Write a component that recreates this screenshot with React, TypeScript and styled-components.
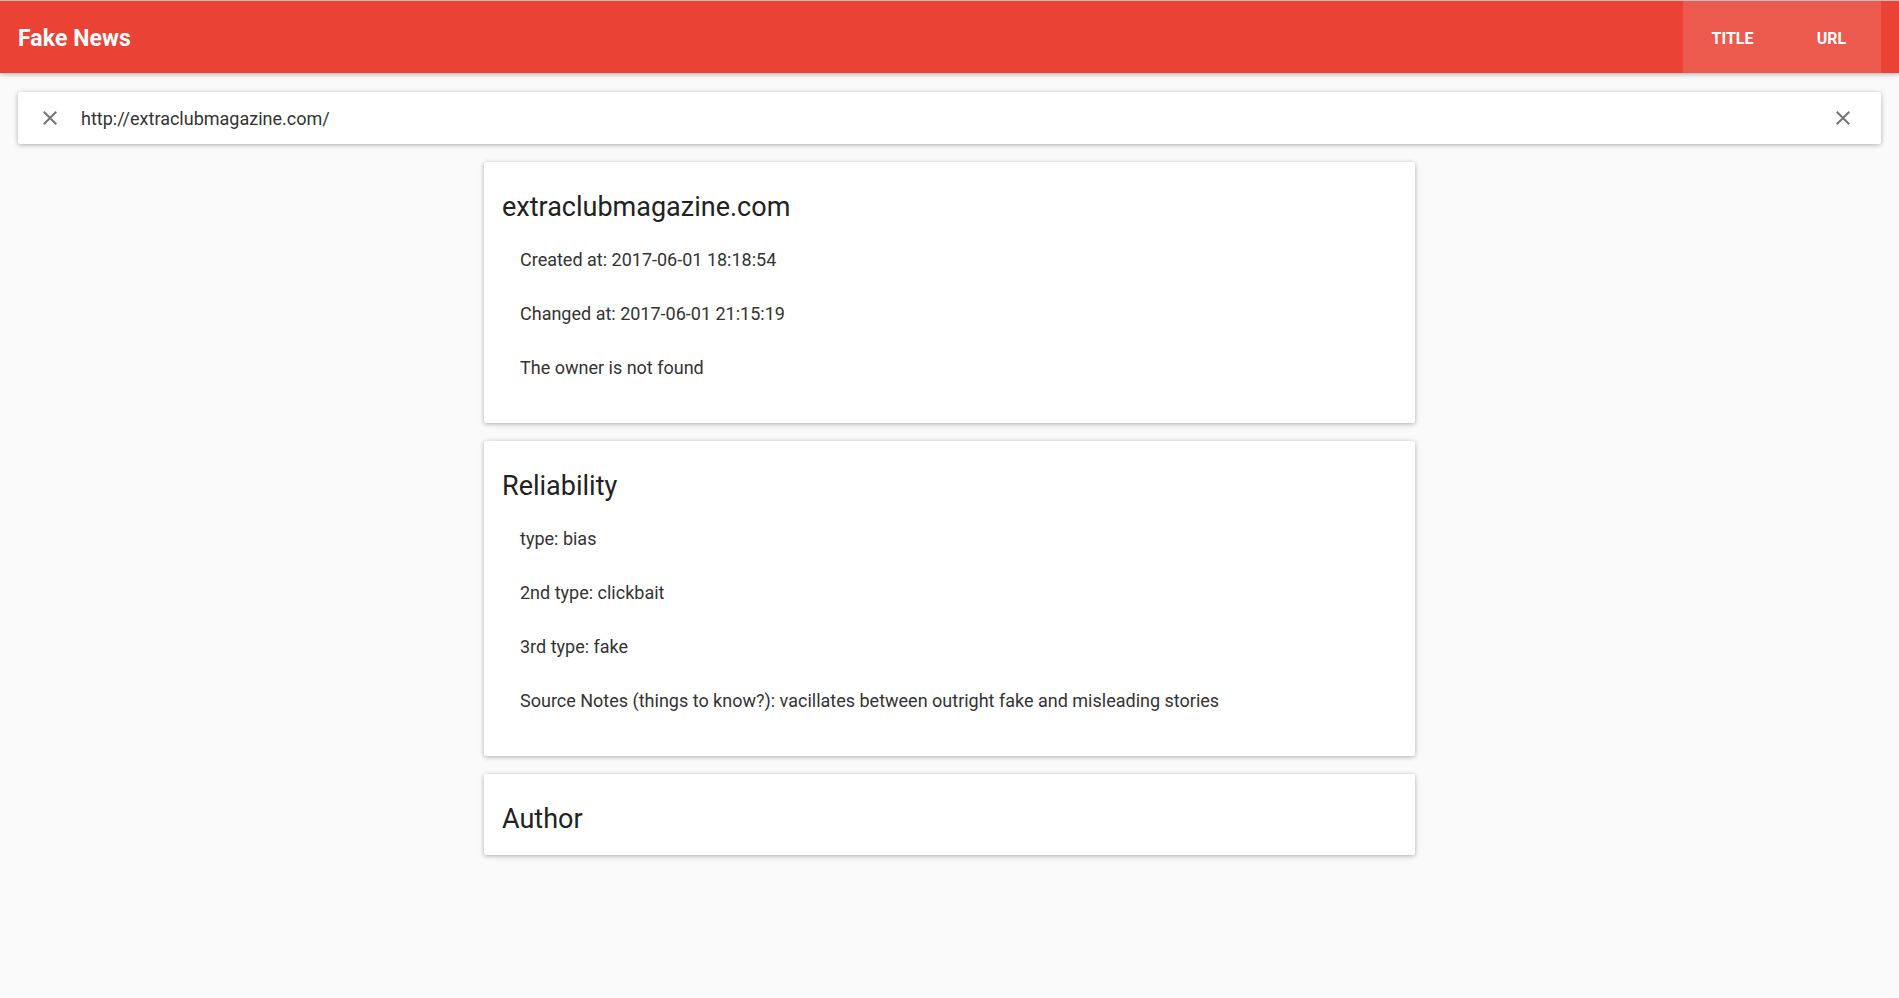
import React from "react";
import styled, { createGlobalStyle } from "styled-components";

const Global = createGlobalStyle`
  html, body { margin: 0; padding: 0; background: #fafafa; }
  body { font-family: Roboto, "Liberation Sans", sans-serif; -webkit-font-smoothing: antialiased; }
  * { box-sizing: border-box; }
`;

const Page = styled.div`
  min-height: 998px;
  background: #fafafa;
  padding-bottom: 40px;
`;

const AppBar = styled.header`
  height: 73px;
  border-top: 1px solid #bdbdbd;
  background: #ea4335;
  display: flex;
  align-items: stretch;
  box-shadow: 0 1px 6px rgba(0, 0, 0, 0.16), 0 1px 4px rgba(0, 0, 0, 0.18);
  position: relative;
  z-index: 2;
`;

const Brand = styled.h1`
  flex: 1;
  margin: 0;
  padding: 2px 0 0 18px;
  display: flex;
  align-items: center;
  color: #fff;
  font-size: 23px;
  font-weight: 700;
  letter-spacing: 0.1px;
`;

const Tabs = styled.nav`
  display: flex;
  margin-right: 18px;
  background: rgba(255, 255, 255, 0.12);
`;

const Tab = styled.button`
  width: 99px;
  border: none;
  background: transparent;
  color: #fff;
  font-family: Roboto, "Liberation Sans", sans-serif;
  font-size: 16px;
  font-weight: 700;
  text-transform: uppercase;
  cursor: pointer;
  padding: 2px 0 0;
`;

const SearchBar = styled.div`
  margin: 19px 18px 0;
  height: 52px;
  background: #fff;
  border-radius: 2px;
  display: flex;
  align-items: center;
  padding: 0 26px 0 20px;
  box-shadow: 0 1px 6px rgba(0, 0, 0, 0.12), 0 1px 4px rgba(0, 0, 0, 0.2);
`;

const IconButton = styled.span`
  width: 24px;
  height: 24px;
  display: inline-flex;
  color: #757575;
  flex: none;
`;

const SearchText = styled.div`
  flex: 1;
  margin-left: 19px;
  font-size: 18px;
  color: #333;
`;

const Cards = styled.main`
  width: 931px;
  margin: 18px auto 0;
  display: flex;
  flex-direction: column;
  gap: 18px;
`;

const Card = styled.section`
  background: #fff;
  border-radius: 2px;
  padding: 29px 16px 20px 18px;
  box-shadow: 0 1px 6px rgba(0, 0, 0, 0.12), 0 1px 4px rgba(0, 0, 0, 0.2);
`;

const CardTitle = styled.h2`
  margin: 0;
  font-size: 27px;
  line-height: 32px;
  font-weight: 400;
  color: #222;
`;

const List = styled.ul`
  list-style: none;
  margin: 0;
  padding: 10px 0 8px 18px;
`;

const Item = styled.li`
  height: 54px;
  line-height: 54px;
  font-size: 18px;
  color: #333;
`;

const CloseIcon = () => (
  <IconButton>
    <svg viewBox="0 0 24 24" width="24" height="24" fill="currentColor">
      <path d="M19 6.41L17.59 5 12 10.59 6.41 5 5 6.41 10.59 12 5 17.59 6.41 19 12 13.41 17.59 19 19 17.59 13.41 12z" />
    </svg>
  </IconButton>
);

const sections: { title: string; items: string[] }[] = [
  {
    title: "extraclubmagazine.com",
    items: [
      "Created at: 2017-06-01 18:18:54",
      "Changed at: 2017-06-01 21:15:19",
      "The owner is not found",
    ],
  },
  {
    title: "Reliability",
    items: [
      "type: bias",
      "2nd type: clickbait",
      "3rd type: fake",
      "Source Notes (things to know?): vacillates between outright fake and misleading stories",
    ],
  },
  { title: "Author", items: [] },
];

export default function App() {
  return (
    <Page>
      <Global />
      <AppBar>
        <Brand>Fake News</Brand>
        <Tabs>
          <Tab>Title</Tab>
          <Tab>URL</Tab>
        </Tabs>
      </AppBar>
      <SearchBar>
        <CloseIcon />
        <SearchText>http://extraclubmagazine.com/</SearchText>
        <CloseIcon />
      </SearchBar>
      <Cards>
        {sections.map((s) => (
          <Card key={s.title}>
            <CardTitle>{s.title}</CardTitle>
            {s.items.length > 0 && (
              <List>
                {s.items.map((it) => (
                  <Item key={it}>{it}</Item>
                ))}
              </List>
            )}
          </Card>
        ))}
      </Cards>
    </Page>
  );
}
